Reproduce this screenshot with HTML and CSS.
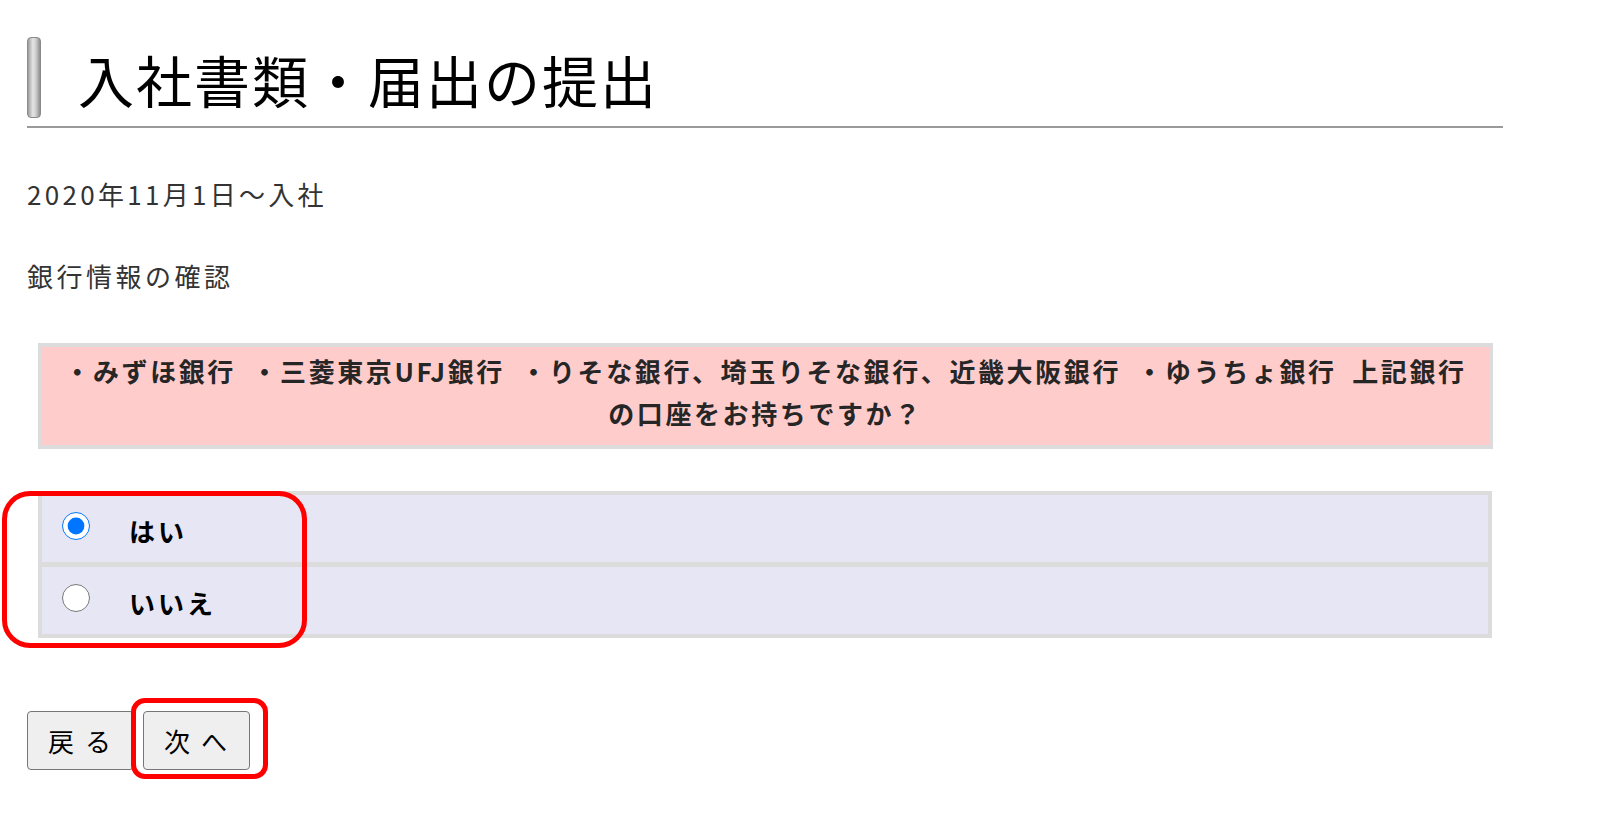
FILE: index.html
```html
<!DOCTYPE html>
<html lang="ja">
<head>
  <meta charset="UTF-8">
  <meta name="viewport" content="width=device-width, initial-scale=1.0">
  <title>入社書類・届出の提出</title>
  <link rel="stylesheet" href="styles.css">
</head>
<body>

  <div class="entry">
    <h1 class="entry--title">
      <span class="entry--title-bar"></span>
      <span class="entry--title-text">入社書類・届出の提出</span>
    </h1>

    <p class="entry--date">2020年11月1日～入社</p>
    <p class="entry--step">銀行情報の確認</p>

    <div class="question">
      ・みずほ銀行 ・三菱東京UFJ銀行 ・りそな銀行、埼玉りそな銀行、近畿大阪銀行 ・ゆうちょ銀行 上記銀行<br>の口座をお持ちですか？
    </div>

    <div class="choices">
      <label class="choices--row">
        <input type="radio" name="bank" value="yes" checked>
        <span class="choices--label">はい</span>
      </label>
      <label class="choices--row">
        <input type="radio" name="bank" value="no">
        <span class="choices--label">いいえ</span>
      </label>
      <span class="mark mark--choices"></span>
    </div>

    <div class="entry--foot">
      <button type="button" class="entry--btn" data-act="prev">戻る</button>
      <button type="button" class="entry--btn" data-act="next">次へ</button>
      <span class="mark mark--next"></span>
    </div>
  </div>

</body>
</html>
```

FILE: styles.css
```css
html,body{margin: 0; padding: 0; background-color: #fff;}
*{box-sizing: border-box;}
body{
  min-height: 835px;
  font-family: "Noto Sans CJK JP", "Noto Sans", sans-serif;
  color: #333;
}
.entry{
  width: 1476px;
  margin-left: 27px;
  padding: 37px 0 50px;
}
.entry--title{
  display: flex;
  align-items: center;
  margin: 0;
  padding-bottom: 8px;
  border-bottom: 2px solid #9a9a9a;
  font-weight: normal;
}
.entry--title-bar{
  display: block;
  width: 14px;
  height: 81px;
  border: 1px solid #8a8a8a;
  border-radius: 4px;
  background: linear-gradient(to right, #9c9c9c, #e4e4e4 40%, #cfcfcf 65%, #8e8e8e);
}
.entry--title-text{
  margin-left: 37px;
  padding-top: 2px;
  font-size: 56px;
  line-height: 75px;
  letter-spacing: 2px;
  color: #000;
}
.entry--date{
  margin: 48px 0 0;
  font-size: 26px;
  line-height: 36px;
  letter-spacing: 3.3px;
}
.entry--step{
  margin: 46px 0 0;
  font-size: 26px;
  line-height: 36px;
  letter-spacing: 3.5px;
}

.question{
  margin: 49px 10px 0 11px;
  padding: 3px 10px 11px;
  border: 4px solid #dcdcdc;
  background-color: #ffcccc;
  color: #262626;
  font-size: 26px;
  font-weight: bold;
  line-height: 42px;
  letter-spacing: 2.6px;
  word-spacing: 7px;
  text-align: center;
}

.choices{
  position: relative;
  display: flex;
  flex-direction: column;
  gap: 5px;
  margin: 42px 11px 0 11px;
  padding: 4px;
  background-color: #dcdcdc;
}
.choices--row{
  display: flex;
  align-items: center;
  height: 67px;
  padding-left: 20px;
  background-color: #e6e6f5;
  color: #000;
}
.choices--row input{
  width: 28px;
  height: 28px;
  margin: 0 0 5px 0;
}
.choices--label{
  margin: 3px 0 0 39px;
  font-size: 26px;
  font-weight: bold;
  letter-spacing: 3px;
}

.entry--foot{
  position: relative;
  display: flex;
  gap: 9px;
  margin-top: 73px;
}
.entry--btn{
  height: 59px;
  padding: 0 11px 0 20px;
  border: 1px solid #767676;
  border-radius: 4px;
  background-color: #efefef;
  color: #000;
  font-family: inherit;
  font-size: 26px;
  letter-spacing: 11px;
}

.mark{
  position: absolute;
  border: 5px solid #ff0000;
  pointer-events: none;
}
.mark--choices{
  left: -36px;
  top: 0;
  width: 305px;
  height: 157px;
  border-radius: 28px;
}
.mark--next{
  left: 104px;
  top: -13px;
  width: 137px;
  height: 81px;
  border-radius: 14px;
}
```
